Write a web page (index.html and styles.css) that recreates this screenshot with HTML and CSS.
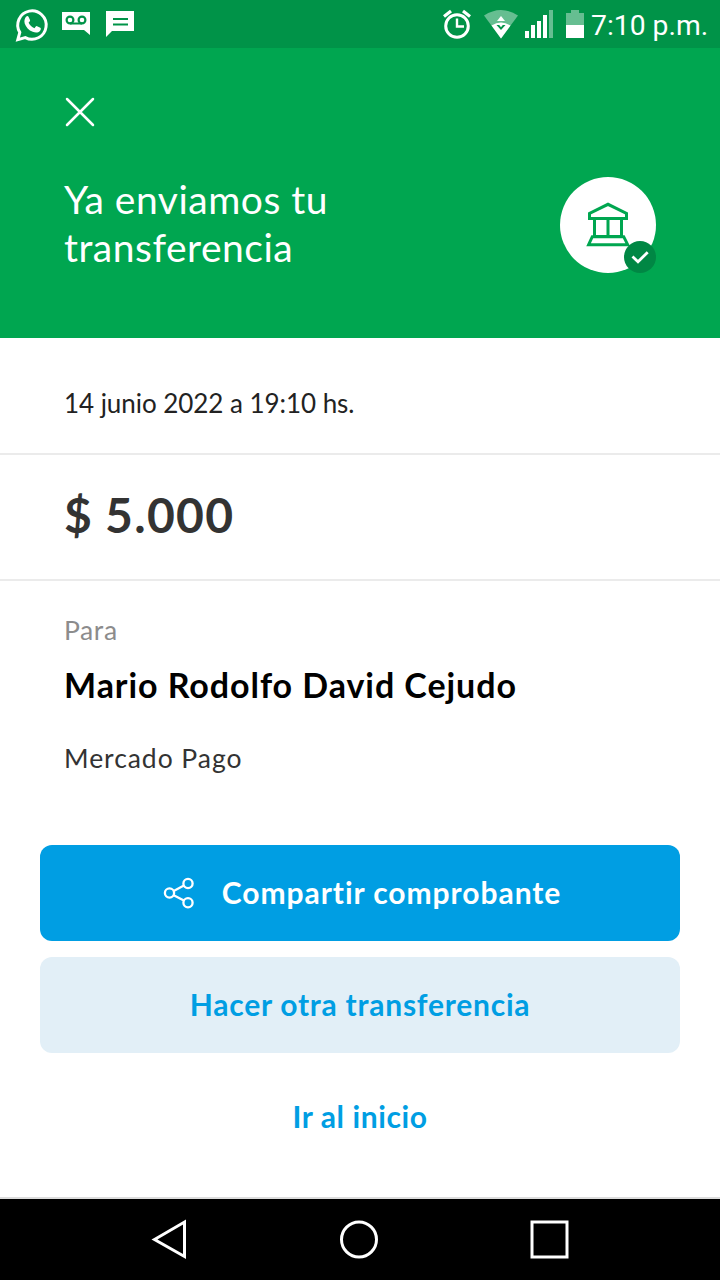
FILE: index.html
```html
<!DOCTYPE html>
<html lang="es">
<head>
<meta charset="utf-8">
<title>Transferencia enviada</title>
<link rel="stylesheet" href="styles.css">
</head>
<body>
<div class="status">
  <svg class="status-left" width="150" height="48" viewBox="0 0 150 48" fill="none">
    <path d="M17.800 39.600l2-7.200A14.200 14.200 0 1 1 25.300 37.600z" stroke="#fff" stroke-width="3"/>
    <path d="M26.300 16.600c.6-.7 1.800-.7 2.200.1l1.500 3.300c.3.8-.1 1.300-1.400 2.800 1.300 2.600 3.200 4.300 5.900 5.400 1.400-1.600 1.700-2.400 2.600-2l3.200 1.600c1 .5.400 2.300-.4 3.200-1.600 1.700-4.200 2.100-7.200.8-4-1.700-6.800-4.800-8-8.400-.8-2.700.1-5.200 1.600-6.800z" fill="#fff"/>
    <path d="M62 12h28v23l-6-5H62z" fill="#fff"/>
    <path d="M70 23.500h12" stroke="#009348" stroke-width="2"/>
    <circle cx="70" cy="20" r="3.400" stroke="#009348" stroke-width="2.200"/>
    <circle cx="82" cy="20" r="3.400" stroke="#009348" stroke-width="2.200"/>
    <path d="M106 11h28v20h-22l-6 6z" fill="#fff"/>
    <path d="M113 19h15M113 24.500h15" stroke="#009348" stroke-width="1.800"/>
  </svg>
  <svg class="status-right" width="150" height="48" viewBox="440 0 150 48" fill="none">
    <circle cx="457" cy="26" r="11.300" stroke="#fff" stroke-width="3"/>
    <path d="M457 18.500V26.500H464" stroke="#fff" stroke-width="2.400"/>
    <path d="M444 16.500l7-5.500M463 11l7 5.500" stroke="#fff" stroke-width="3.200"/>
    <path d="M501 38.500L484 15.500Q501 4.500 518 15.500z" fill="#66be91"/>
    <path d="M501 38.500L491.500 25.500Q501 19.500 510.500 25.500z" fill="#fff"/>
    <path d="M497 21l4-5 4 5z" fill="#fff"/>
    <path d="M496.500 25l4.500 5 4.500-5z" fill="#009348"/>
    <path d="M499 24.700h4l-2 2.600z" fill="#fff"/>
    <path d="M525 31h4v7h-4zM531 25h4v13h-4zM537 21h4v17h-4zM543 15h4v23h-4z" fill="#fff"/>
    <path d="M549 10h4v28h-4z" fill="#66be91"/>
    <path d="M566 13h5v-3h8v3h5v12h-18z" fill="#66be91"/>
    <path d="M566 25h18v13h-18z" fill="#fff"/>
  </svg>
  <span class="clock">7:10 p.m.</span>
</div>

<header class="hero">
  <svg class="close" width="32" height="32" viewBox="0 0 32 32"><path d="M3 3l26 26M29 3L3 29" stroke="#fff" stroke-width="2.500" stroke-linecap="round"/></svg>
  <div class="hero-row">
    <h1 class="title">Ya enviamos tu<br>transferencia</h1>
    <svg width="96" height="96" viewBox="0 0 96 96" fill="none">
      <circle cx="48" cy="48" r="48" fill="#fff"/>
      <g stroke="#00a650" stroke-width="3">
        <path d="M29.500 41.500v-5L48 27.300l18.500 9.200v5zM34.500 42v17.500M61.500 42v17.500M48 42v17.500M32.300 59.700h31.400l4 8H28.600zM34 59.500h28"/>
      </g>
      <circle cx="80" cy="80" r="16" fill="#008744"/>
      <path d="M73.500 80.500l4.500 4.300 8.700-8.600" stroke="#fff" stroke-width="2.800" stroke-linecap="square"/>
    </svg>
  </div>
</header>

<main class="content">
  <section class="row date"><span class="date-text">14 junio 2022 a 19:10 hs.</span></section>
  <section class="row amount"><span class="amount-text">$ 5.000</span></section>
  <section class="payee">
    <div class="label">Para</div>
    <div class="name">Mario Rodolfo David Cejudo</div>
    <div class="bank">Mercado Pago</div>
  </section>
  <div class="actions">
    <button class="btn primary">
      <svg class="share" width="32" height="32" viewBox="0 0 32 32" fill="none" stroke="#fff" stroke-width="2.300"><circle cx="6.500" cy="16" r="4.600"/><circle cx="25" cy="6.500" r="4.600"/><circle cx="25" cy="25.700" r="4.600"/><path d="M10.700 14l10.200-5.400M10.700 18.200l10.200 5.400"/></svg>
      <span class="share-text">Compartir comprobante</span>
    </button>
    <button class="btn secondary">Hacer otra transferencia</button>
    <button class="btn link">Ir al inicio</button>
  </div>
</main>

<nav class="nav">
  <svg width="720" height="81" viewBox="0 0 720 81" fill="none" stroke="#fff" stroke-width="3">
    <path d="M154.500 40.500L184.500 23v34.500z"/>
    <circle cx="359" cy="40.500" r="17.500"/>
    <path d="M532 23h35v35h-35z"/>
  </svg>
</nav>
</body>
</html>
```

FILE: styles.css
```css
* { box-sizing: border-box; }
body {
  margin: 0;
  width: 720px;
  height: 1280px;
  display: flex;
  flex-direction: column;
  overflow: hidden;
  background: #fff;
  font-family: Lato, "Liberation Sans", sans-serif;
}
svg { display: block; flex: none; }
.status {
  height: 48px;
  display: flex;
  background: #009348;
}
.status-right { margin-left: 290px; }
.clock {
  margin-left: 1px;
  font: 400 28.3px/52px Roboto, sans-serif;
  color: #fff;
  white-space: nowrap;
}
.hero {
  height: 290px;
  padding: 48px 64px 0;
  background: #00a650;
}
.hero-row {
  display: flex;
  align-items: flex-start;
  justify-content: space-between;
  margin-top: 49px;
}
.title {
  margin: -2px 0 0;
  font-size: 39px;
  font-weight: 400;
  line-height: 48px;
  letter-spacing: 0.5px;
  color: #fff;
}
.content { flex: 1; }
.row {
  display: flex;
  align-items: center;
  padding-left: 64px;
  border-bottom: 2px solid #ebebeb;
}
.date {
  height: 117px;
  font-size: 26px;
  color: #222;
}
.date-text { margin-top: 14px; letter-spacing: -0.05px; }
.amount {
  height: 126px;
  padding-bottom: 6px;
  font-size: 48px;
  font-weight: 700;
  letter-spacing: 1.3px;
  word-spacing: -1px;
  color: #333;
}
.payee { height: 264px; padding: 30px 64px 0; }
.label { font-size: 26.5px; line-height: 38px; letter-spacing: 0.6px; color: #8c8c8c; }
.name {
  margin-top: 12px;
  font-size: 34px;
  line-height: 48px;
  font-weight: 700;
  letter-spacing: 0.94px;
  color: #000;
  white-space: nowrap;
}
.bank { margin-top: 30px; font-size: 26.5px; line-height: 38px; letter-spacing: 0.95px; color: #333; }
.actions { display: flex; flex-direction: column; gap: 16px; padding: 0 40px; }
.btn {
  height: 96px;
  display: flex;
  align-items: center;
  justify-content: center;
  border: 0;
  border-radius: 12px;
  padding: 0 0 2px;
  font: 700 30px/40px Lato, "Liberation Sans", sans-serif;
  letter-spacing: 0.75px;
  background: transparent;
  color: #009ee3;
}
.primary { background: #009ee3; color: #fff; padding-left: 4px; }
.share { margin: 2px 27px 0 0; }
.share-text { letter-spacing: 0.95px; }
.secondary { background: #e2eff7; }
.link { letter-spacing: 0.6px; }
.nav { height: 83px; border-top: 2px solid #dcdcdc; background: #000; }
```
